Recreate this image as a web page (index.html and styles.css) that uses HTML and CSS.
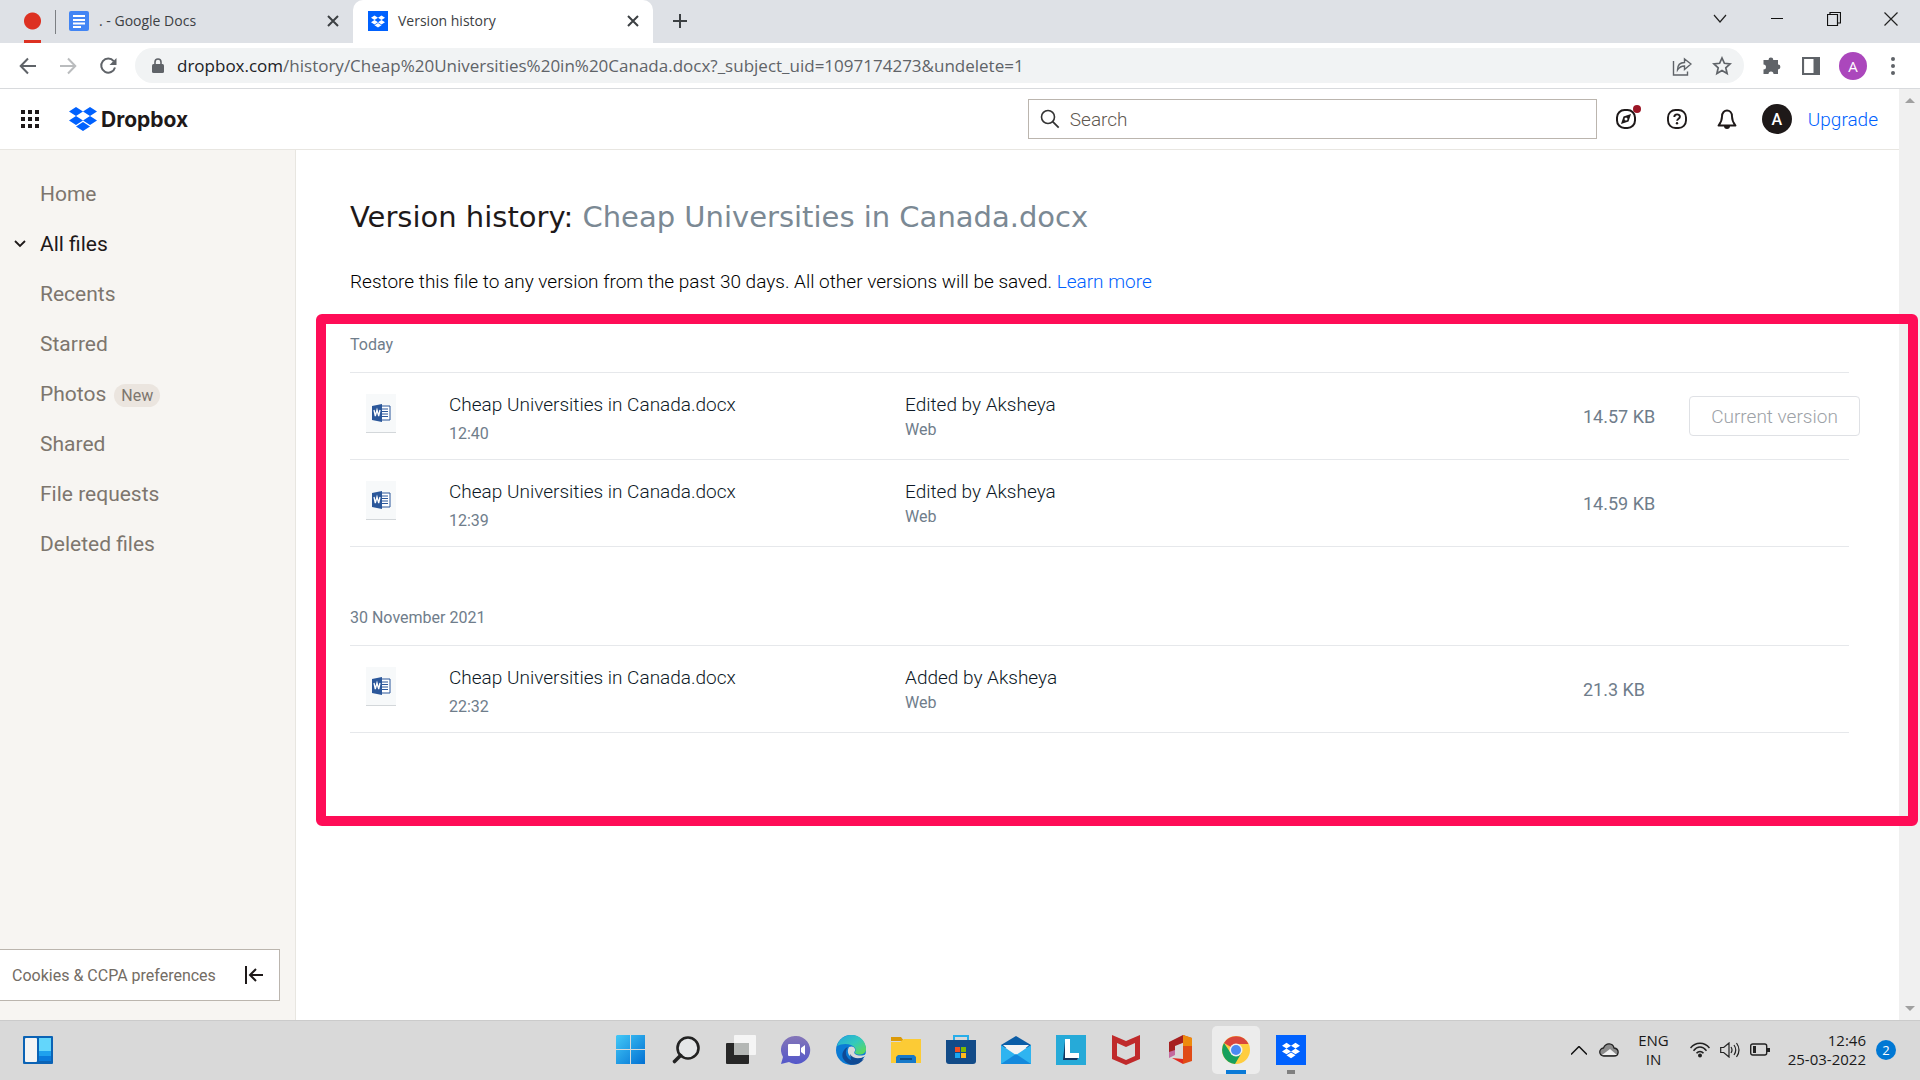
FILE: index.html
```html
<!DOCTYPE html>
<html lang="en">
<head>
<meta charset="utf-8">
<title>Version history</title>
<link rel="stylesheet" href="styles.css">
</head>
<body>
<svg class="defs" aria-hidden="true">
  <symbol id="box" viewBox="0 0 28 24"><path d="M7 0 14 4.500 7 9 0 4.500ZM21 0 28 4.500 21 9 14 4.500ZM7 9 14 13.500 7 18 0 13.500ZM21 9 28 13.500 21 18 14 13.500ZM14 15 21 19.500 14 24 7 19.500Z" fill="currentColor"/></symbol>
  <symbol id="close" viewBox="0 0 12 12"><path d="M1 1 11 11M11 1 1 11" stroke="currentColor" stroke-width="2" fill="none"/></symbol>
  <symbol id="word" viewBox="0 0 30 39">
    <rect width="30" height="39" fill="#f7f9fa"/><rect y="38" width="30" height="1" fill="#d3d7da"/>
    <path d="M14 12h10v14H14" fill="#fff" stroke="#2b579a"/><path d="M16 15h6M16 17.500h6M16 20h6M16 22.500h6" stroke="#2b579a"/>
    <path d="M6 12 16 10V28L6 26Z" fill="#2b579a"/><path d="m8 16 1.300 6 1.700-6 1.700 6L14 16" fill="none" stroke="#fff" stroke-width="1.300"/>
  </symbol>
</svg>

<header class="browser">
  <div class="tabs">
    <button class="pinned" aria-label="Recording"><span class="dot"></span></button>
    <div class="tab">
      <svg width="20" height="20" viewBox="0 0 20 20"><rect width="20" height="20" rx="2" fill="#4285f4"/><path d="M4 5h12M4 9h12M4 12.500h12M4 16h8" stroke="#fff" stroke-width="1.800"/></svg>
      <span class="tab-title">. - Google Docs</span>
      <button class="tab-close" aria-label="Close tab"><svg width="12" height="12"><use href="#close"/></svg></button>
    </div>
    <div class="tab active">
      <span class="favicon"><svg width="14" height="13"><use href="#box"/></svg></span>
      <span class="tab-title">Version history</span>
      <button class="tab-close" aria-label="Close tab"><svg width="12" height="12"><use href="#close"/></svg></button>
    </div>
    <button class="new-tab" aria-label="New tab"><svg width="16" height="16" viewBox="0 0 16 16"><path d="M8 1v14M1 8h14" stroke="#3c4043" stroke-width="2"/></svg></button>
    <div class="window-controls">
      <button aria-label="Search tabs"><svg width="14" height="14" viewBox="0 0 14 14"><path d="m1 3 6 7 6-7" fill="none" stroke="#222" stroke-width="1.200"/></svg></button>
      <button aria-label="Minimize"><svg width="14" height="14" viewBox="0 0 14 14"><path d="M1 6.500h12" stroke="#111"/></svg></button>
      <button aria-label="Restore"><svg width="14" height="14" viewBox="0 0 14 14"><path d="M.5 2.500h10v11H.5ZM3 2V.5h10.500V11H11" fill="none" stroke="#111" stroke-width="1.200"/></svg></button>
      <button aria-label="Close"><svg width="14" height="14" viewBox="0 0 14 14"><path d="m.5.5 13 13m0-13-13 13" stroke="#222" stroke-width="1.200"/></svg></button>
    </div>
  </div>
  <div class="toolbar">
    <button aria-label="Back"><svg width="18" height="18" viewBox="0 0 18 18"><path d="M17 9H2m7-7.500L1.700 9 9 16.500" fill="none" stroke="#5f6368" stroke-width="2"/></svg></button>
    <button aria-label="Forward"><svg width="18" height="18" viewBox="0 0 18 18"><path d="M1 9h15M9 1.500 16.300 9 9 16.500" fill="none" stroke="#babcbe" stroke-width="2"/></svg></button>
    <button aria-label="Reload"><svg width="20" height="20" viewBox="0 0 20 20"><path d="M15.700 5.200A7 7 0 1 0 17 11.500" fill="none" stroke="#5f6368" stroke-width="2"/><path d="M18.500 2v7h-7Z" fill="#5f6368"/></svg></button>
    <div class="address">
      <svg width="12" height="16" viewBox="0 0 12 16"><rect y="6" width="12" height="9" rx="1.500" fill="#5f6368"/><path d="M3 7V4a3 3 0 0 1 6 0v3" fill="none" stroke="#5f6368" stroke-width="1.600"/></svg>
      <span class="url"><b>dropbox.com</b>/history/Cheap%20Universities%20in%20Canada.docx?_subject_uid=1097174273&amp;undelete=1</span>
      <button aria-label="Share this page"><svg width="20" height="20" viewBox="0 0 20 20"><path d="M1.500 5v14h14v-3.500M5.500 14c0-5 3-7.500 7-7.500V3L19 8 12.500 13.500V10c-3 0-5 .8-7 4Z" fill="none" stroke="#5f6368" stroke-width="1.400"/></svg></button>
      <button aria-label="Bookmark"><svg width="20" height="20" viewBox="0 0 20 20"><path d="m10 2 2.400 5.300 5.700.6-4.300 3.900 1.300 5.700-5.100-3-5.100 3 1.300-5.700L1.900 7.900l5.700-.6Z" fill="none" stroke="#5f6368" stroke-width="1.700"/></svg></button>
    </div>
    <div class="extensions">
      <button aria-label="Extensions"><svg width="20" height="20" viewBox="0 0 20 20"><path d="M1.500 4h5a2.400 2.400 0 1 1 4.800 0H16v4.500a2.400 2.400 0 1 1 0 4.800V18h-4.500a2.500 2.500 0 1 0-5 0h-5v-4.500a2.500 2.500 0 1 0 0-5Z" fill="#5f6368"/></svg></button>
      <button aria-label="Side panel"><svg width="18" height="18" viewBox="0 0 18 18"><path d="M1 1h16v16H1Z" fill="none" stroke="#5f6368" stroke-width="2.200"/><path d="M11.500 1H17v16h-5.500Z" fill="#5f6368"/></svg></button>
      <button class="avatar purple" aria-label="Profile">A</button>
      <button aria-label="Menu"><svg width="4" height="18" viewBox="0 0 4 18"><g fill="#5f6368"><circle cx="2" cy="2" r="2"/><circle cx="2" cy="9" r="2"/><circle cx="2" cy="16" r="2"/></g></svg></button>
    </div>
  </div>
</header>

<div class="viewport">
  <div class="app">
    <header class="app-header">
      <button aria-label="Apps"><svg width="18" height="18" viewBox="0 0 18 18"><path d="M0 2h18M0 9h18M0 16h18" stroke="#1e1919" stroke-width="4" stroke-dasharray="4 3"/></svg></button>
      <a class="logo" href="#"><svg width="28" height="24"><use href="#box"/></svg><span>Dropbox</span></a>
      <label class="search">
        <svg width="20" height="20" viewBox="0 0 20 20"><circle cx="8" cy="8" r="6.500" fill="none" stroke="#333" stroke-width="1.600"/><path d="m12.700 12.700 6 6" stroke="#333" stroke-width="1.800"/></svg>
        <input type="search" placeholder="Search" aria-label="Search">
      </label>
      <div class="actions">
        <button aria-label="What's new"><svg width="28" height="28" viewBox="0 0 28 28"><rect x="4" y="5" width="18" height="18" rx="7.500" fill="none" stroke="#1e1919" stroke-width="2"/><path d="m18 9-2.500 7.500L8 19l2.500-7.500Z" fill="#1e1919"/><circle cx="13" cy="14" r="1.500" fill="#fff"/><circle cx="24" cy="4" r="4" fill="#9b1525"/></svg></button>
        <button aria-label="Help"><svg width="20" height="20" viewBox="0 0 20 20"><rect x="1" y="1" width="18" height="18" rx="7.500" fill="none" stroke="#1e1919" stroke-width="1.900"/><path d="M7.300 8c0-3.500 5.600-3.500 5.600-.3 0 1.900-2.800 2-2.800 4.100" fill="none" stroke="#1e1919" stroke-width="1.900"/><circle cx="10" cy="14.300" r="1.200" fill="#1e1919"/></svg></button>
        <button aria-label="Notifications"><svg width="20" height="20" viewBox="0 0 20 20"><path d="M1.500 16.500c2.500-3 3.500-5 3.500-9 0-8 10-8 10 0 0 4 1 6 3.500 9Z" fill="none" stroke="#1e1919" stroke-width="1.900" stroke-linejoin="round"/><path d="M7 17a3 3 0 0 0 6 0Z" fill="#1e1919"/></svg></button>
        <button class="avatar black" aria-label="Account">A</button>
        <a href="#">Upgrade</a>
      </div>
    </header>
    <div class="content">
      <aside class="sidebar">
        <nav>
          <a href="#">Home</a>
          <a class="current" href="#"><svg width="12" height="8" viewBox="0 0 12 8"><path d="m1 1 5 5 5-5" fill="none" stroke="#1e1919" stroke-width="1.800"/></svg>All files</a>
          <a href="#">Recents</a>
          <a href="#">Starred</a>
          <a href="#">Photos<span class="pill">New</span></a>
          <a href="#">Shared</a>
          <a href="#">File requests</a>
          <a href="#">Deleted files</a>
        </nav>
        <div class="cookies">
          <a href="#">Cookies &amp; CCPA preferences</a>
          <button aria-label="Collapse"><svg width="18" height="18" viewBox="0 0 18 18"><path d="M1 0v18M18 9H5.500M11 3 5 9l6 6" fill="none" stroke="#1e1919" stroke-width="2"/></svg></button>
        </div>
      </aside>
      <main>
        <h1>Version history: <span>Cheap Universities in Canada.docx</span></h1>
        <p class="intro">Restore this file to any version from the past 30 days. All other versions will be saved. <a href="#">Learn more</a></p>
        <section class="history">
          <h2>Today</h2>
          <table>
            <colgroup><col class="c-icon"><col class="c-name"><col><col class="c-size"><col class="c-action"></colgroup>
            <tr><td class="file"><svg width="30" height="39"><use href="#word"/></svg></td><td><strong>Cheap Universities in Canada.docx</strong><small class="time">12:40</small></td><td><strong>Edited by Aksheya</strong><small>Web</small></td><td class="size">14.57 KB</td><td class="action"><button disabled>Current version</button></td></tr>
            <tr><td class="file"><svg width="30" height="39"><use href="#word"/></svg></td><td><strong>Cheap Universities in Canada.docx</strong><small class="time">12:39</small></td><td><strong>Edited by Aksheya</strong><small>Web</small></td><td class="size">14.59 KB</td><td></td></tr>
          </table>
          <h2>30 November 2021</h2>
          <table>
            <colgroup><col class="c-icon"><col class="c-name"><col><col class="c-size"><col class="c-action"></colgroup>
            <tr><td class="file"><svg width="30" height="39"><use href="#word"/></svg></td><td><strong>Cheap Universities in Canada.docx</strong><small class="time">22:32</small></td><td><strong>Added by Aksheya</strong><small>Web</small></td><td class="size">21.3 KB</td><td></td></tr>
          </table>
        </section>
      </main>
    </div>
  </div>
  <div class="scrollbar">
    <svg width="10" height="5" viewBox="0 0 10 5"><path d="M0 5 5 0l5 5Z" fill="#a0a0a0"/></svg>
    <svg width="10" height="5" viewBox="0 0 10 5"><path d="m0 0 5 5 5-5Z" fill="#a0a0a0"/></svg>
  </div>
</div>

<footer class="taskbar">
  <div class="widgets">
    <button aria-label="Widgets"><svg width="30" height="28" viewBox="0 0 30 28"><rect width="30" height="28" rx="1" fill="#0b63b5"/><rect x="2" y="2" width="12" height="24" rx="1" fill="#f4f4f4"/><rect x="16" y="2" width="12" height="13" fill="#63d6fb"/><path d="M16 15h12v5H16Z" fill="#1ea1ee"/><path d="M16 20h12v5H16Z" fill="#0a7bdc"/></svg></button>
  </div>
  <div class="dock">
    <button aria-label="Start"><svg width="30" height="30" viewBox="0 0 30 30"><defs><linearGradient id="g1" x1="0" y1="0" x2="1" y2="1"><stop offset="0" stop-color="#43c9f7"/><stop offset="1" stop-color="#0270d3"/></linearGradient></defs><path d="M1 0h13v14H0V1ZM15 0h14v14H15ZM0 15h14v14H0ZM15 15h14v14H15Z" fill="url(#g1)"/></svg></button>
    <button aria-label="Search"><svg width="30" height="30" viewBox="0 0 30 30"><circle cx="17" cy="13" r="10.500" fill="#e4e6e8" stroke="#222" stroke-width="2.600"/><path d="m9.500 20.500-6 6" stroke="#222" stroke-width="3.600" stroke-linecap="round"/></svg></button>
    <button aria-label="Task view"><svg width="30" height="30" viewBox="0 0 30 30"><rect y="8" width="23" height="21" rx="1" fill="#272727"/><rect x="8" width="22" height="20" rx="1" fill="#f5f5f5"/><path d="M8 8h15v12H8Z" fill="#b4b7b5"/></svg></button>
    <button aria-label="Chat"><svg width="30" height="30" viewBox="0 0 30 30"><defs><linearGradient id="g2" x1="0" y1="0" x2="0" y2="1"><stop offset="0" stop-color="#8576b8"/><stop offset="1" stop-color="#5357ca"/></linearGradient></defs><path d="M15 1a14 14 0 1 1-7 26L0 29l2-7A14 14 0 0 1 15 1Z" fill="url(#g2)"/><rect x="7" y="9" width="12" height="12" rx="1" fill="#fff"/><path d="m20 13 4-3v10l-4-3Z" fill="#fff"/></svg></button>
    <button aria-label="Edge"><svg width="30" height="30" viewBox="0 0 30 30"><defs><linearGradient id="g3" x1="0" y1="0" x2="1" y2="1"><stop offset="0" stop-color="#20a5df"/><stop offset=".5" stop-color="#34c9bd"/><stop offset="1" stop-color="#62dd47"/></linearGradient></defs><circle cx="15" cy="15" r="15" fill="#0b7bd5"/><path d="M1 11C5-4 28-4 30 13c1 7-8 8-11 5-1-1 2-2 0-5-3-5-13-5-18-2Z" fill="url(#g3)"/><path d="M12 12c-6 7 1 19 16 12-6 8-16 7-20 1-4-5 0-12 4-13Z" fill="#104a94"/><path d="M13 12c-3 5 0 11 7 12 4 0 7-1 9-3V29H30V19c-3 2-8 2-11 0-2-2 1-3 0-5-1-3-4-3-6-2Z" fill="#d9d9d9"/><path d="M14 19c3 5 9 5 14 3-3 6-10 7-13 3Z" fill="#104a94"/></svg></button>
    <button aria-label="File Explorer"><svg width="30" height="28" viewBox="0 0 30 28"><path d="M0 1h10l3 4H0Z" fill="#dc9a08"/><path d="M0 6h9l4-3h17v24H0Z" fill="#fccb35"/><path d="M5 27v-6l2-2h16l2 2v6Z" fill="#1779c9"/><path d="M9 23h12" stroke="#0c4d87" stroke-width="2"/></svg></button>
    <button aria-label="Microsoft Store"><svg width="30" height="30" viewBox="0 0 30 30"><path d="M8 6V1h14v5" fill="none" stroke="#27aeea" stroke-width="2"/><path d="M0 5h30v21q0 3-3 3H3q-3 0-3-3Z" fill="#124b88"/><path d="M9 12h5v5H9Z" fill="#f25022"/><path d="M15 12h5v5h-5Z" fill="#7fba00"/><path d="M9 18h5v5H9Z" fill="#1aa7f0"/><path d="M15 18h5v5h-5Z" fill="#ffb91b"/></svg></button>
    <button aria-label="Mail"><svg width="30" height="28" viewBox="0 0 30 28"><path d="M0 9 15 0l15 9v3H0Z" fill="#0b5da6"/><path d="M2 9h26L15 21Z" fill="#f4f4f4"/><path d="m0 9 15 10L30 9v19H0Z" fill="#2fb4f0"/><path d="M0 28 15 18l15 10Z" fill="#1489dc"/></svg></button>
    <button aria-label="Lenovo Vantage"><svg width="30" height="30" viewBox="0 0 30 30"><path d="M0 0h30v30H0Z" fill="#26aad8"/><path d="m9 6-2 19h14l1-2H11Z" fill="#12355f"/><path d="M9 4h5v14h9v5H9Z" fill="#fff"/></svg></button>
    <button aria-label="McAfee"><svg width="28" height="30" viewBox="0 0 28 30"><path d="m0 0 14 6L28 0v24l-14 6-14-6Zm5 8v13l9 4 9-4V8l-9 4Z" fill="#c02a2b"/></svg></button>
    <button aria-label="Office"><svg width="24" height="30" viewBox="0 0 24 30"><path d="M0 7 14 0l2 1v6L6 11v8L0 22Z" fill="#a62020"/><path d="m14 0 9 3v23l-9 3Z" fill="#e04b16"/><path d="m14 0 9 3v8h-9Z" fill="#ed8a0d"/><path d="m3 23 11 1v5Z" fill="#e02a20"/><path d="m0 17 6-2v5l-6 3Z" fill="#c46a9f"/></svg></button>
    <button class="running" aria-label="Chrome"><svg width="28" height="28" viewBox="0 0 28 28"><circle cx="14" cy="14" r="14" fill="#ffcd40"/><path d="M14 14 2 7a14 14 0 0 1 24.500 1H14Z" fill="#d9453c"/><path d="M2 7a14 14 0 0 0 11 21l6.500-11L14 14 8 16Z" fill="#17a05d"/><circle cx="14" cy="14" r="6.500" fill="#f0f0f0"/><circle cx="14" cy="14" r="5" fill="#4a89f3"/></svg></button>
    <button class="open" aria-label="Dropbox"><span class="dropbox-tile"><svg width="18" height="17"><use href="#box"/></svg></span></button>
  </div>
  <div class="tray">
    <button aria-label="Hidden icons"><svg width="16" height="9" viewBox="0 0 16 9"><path d="m0 8.500 8-8 8 8" fill="none" stroke="#111" stroke-width="1.500"/></svg></button>
    <svg class="cloud" width="20" height="14" viewBox="0 0 20 14"><path d="M5 13a4 4 0 0 1-.5-8C7-1 14 0 15 5c6 1 5 8 0 8Z" fill="#8c8c8c" stroke="#222" stroke-width="1.300"/><path d="m3 12 8-6 7 6Z" fill="#f0f0f0"/></svg>
    <span class="lang">ENG<br>IN</span>
    <div class="status">
      <svg width="20" height="16" viewBox="0 0 20 16"><g fill="none" stroke="#222" stroke-width="1.500"><path d="M.5 6c5-6.500 14-6.500 19 0M3.500 8.700c4-5 9-5 13 0M6.500 11.300c2-2.500 5-2.500 7 0"/></g><circle cx="10" cy="13.500" r="2" fill="#222"/></svg>
      <svg width="20" height="16" viewBox="0 0 20 16"><path d="M.7 5.500h3L9 1v14l-5.300-4.500h-3ZM11 5q2 3 0 6M14 3q3.500 5 0 10M16.500 1q5 7 0 14" fill="none" stroke="#222" stroke-width="1.200"/></svg>
      <svg width="20" height="14" viewBox="0 0 20 14"><rect x=".7" y="1" width="16" height="11" rx="2" fill="none" stroke="#222" stroke-width="1.400"/><path d="M3 3h3v7H3ZM17 5h3v4h-3Z" fill="#222"/></svg>
    </div>
    <time>12:46<br>25-03-2022</time>
    <span class="count">2</span>
  </div>
</footer>
</body>
</html>
```
FILE: styles.css
```css
* { box-sizing: border-box; }
body {
  margin: 0;
  min-height: 100vh;
  display: flex;
  flex-direction: column;
  font-family: Roboto, "Liberation Sans", sans-serif;
  font-size: 19px;
  font-weight: 300;
  color: #1b2733;
  background: #fff;
}
button {
  display: flex;
  align-items: center;
  justify-content: center;
  border: 0;
  padding: 0;
  background: none;
  font: inherit;
  color: inherit;
}
a { color: #0061fe; text-decoration: none; }
svg { display: block; flex: none; }
.defs { width: 0; height: 0; position: absolute; }

/* Browser frame */
.browser { font-family: "Open Sans", "Noto Sans", sans-serif; font-weight: 400; }
.tabs {
  display: flex;
  height: 43px;
  background: #dee1e6;
  color: #3c4043;
  font-size: 14px;
}
.pinned {
  width: 32px;
  margin-left: 24px;
  justify-content: flex-start;
  background: linear-gradient(#7c7f83, #7c7f83) right / 1px 24px no-repeat;
}
.dot {
  width: 17px;
  height: 43px;
  background: linear-gradient(#dd3122, #dd3122) bottom / 17px 3px no-repeat, radial-gradient(circle at 50% 21px, #dd3122 8px, transparent 9px);
}
.tab {
  display: flex;
  align-items: center;
  gap: 10px;
  width: 297px;
  padding: 0 14px 1px 13px;
}
.tab.active {
  width: 300px;
  padding-left: 15px;
  background: #fff;
  border-radius: 10px 10px 0 0;
}
.tab-title { flex: 1; padding-bottom: 2px; }
.favicon, .dropbox-tile {
  display: grid;
  place-items: center;
  width: 20px;
  height: 20px;
  background: #0061fe;
  color: #fff;
}
.new-tab { width: 54px; height: 42px; }
.window-controls { display: flex; margin-left: auto; padding-right: 1px; }
.window-controls button { width: 57px; height: 37px; }
.toolbar {
  display: flex;
  align-items: center;
  height: 46px;
  padding: 0 21px 0 8px;
  border-bottom: 1px solid #d8dadd;
}
.toolbar > button { width: 40px; }
.address {
  flex: 1;
  display: flex;
  align-items: center;
  gap: 20px;
  height: 35px;
  margin-left: 7px;
  padding: 0 12px 0 17px;
  border-radius: 18px;
  background: #f1f3f4;
}
.url { flex: 1; margin-left: -7px; font-size: 17px; color: #5f6368; }
.url b { font-weight: 400; color: #202124; }
.extensions { display: flex; align-items: center; gap: 20px; padding-left: 18px; }
.extensions .purple { margin-left: -1px; }
.extensions button:last-child { width: 12px; }
.avatar { border-radius: 50%; color: #fff; }
.purple { width: 28px; height: 28px; font-size: 15px; background: #ab47bc; }
.black { width: 30px; height: 30px; font-size: 16px; font-weight: 500; background: #1e1919; }

/* Dropbox page */
.viewport { flex: 1; display: flex; }
.app { flex: 1; min-width: 0; display: flex; flex-direction: column; }
.scrollbar {
  width: 21px;
  display: flex;
  flex-direction: column;
  align-items: center;
  justify-content: space-between;
  padding: 9px 0;
  background: #f0f0f0;
}
.app-header {
  display: flex;
  align-items: center;
  height: 61px;
  padding: 0 21px;
  border-bottom: 1px solid #e8e6e1;
}
.logo {
  display: flex;
  align-items: center;
  gap: 4px;
  margin-left: 30px;
  font: 700 21px Inter, sans-serif;
}
.logo span { color: #1e1919; }
.search {
  display: flex;
  align-items: center;
  gap: 10px;
  width: 569px;
  height: 40px;
  margin-left: auto;
  padding: 0 11px;
  border: 1px solid #bbb5ae;
}
.search input {
  flex: 1;
  border: 0;
  padding: 0;
  outline: 0;
  background: none;
  font: inherit;
  color: #1e1919;
}
.search input::placeholder { color: #5f5850; opacity: 1; }
.actions { display: flex; align-items: center; margin-left: 15px; }
.actions button { width: 30px; margin-right: 20px; }
.actions .avatar { margin: 0 16px 0 0; }
.content { flex: 1; display: flex; }
.sidebar {
  width: 296px;
  display: flex;
  flex-direction: column;
  justify-content: space-between;
  padding: 19px 0;
  background: #f7f5f2;
  border-right: 1px solid #e8e6e1;
}
.sidebar nav a {
  display: flex;
  align-items: center;
  height: 50px;
  padding-left: 40px;
  font-size: 21px;
  font-weight: 400;
  color: #7d766e;
}
.sidebar nav .current { padding-left: 14px; gap: 14px; color: #1e1919; }
.sidebar nav .pill {
  margin: 3px 0 0 8px;
  padding: 0 7px;
  border-radius: 12px;
  background: #ebe5df;
  font-size: 16px;
  line-height: 23px;
}
.cookies {
  display: flex;
  align-items: center;
  justify-content: space-between;
  width: 280px;
  height: 52px;
  padding: 0 16px 0 12px;
  border: 1px solid #bbb5ae;
  border-left: 0;
  background: #fff;
}
.cookies a { font-size: 16px; font-weight: 400; color: #736c64; }
main { flex: 1; min-width: 0; padding: 47px 0 0 20px; }
h1 {
  margin: 0 34px;
  font: 400 29px/40px "DejaVu Sans", sans-serif;
  color: #1e1919;
}
h1 span { color: #7b8994; }
.intro { margin: 33px 34px 20px; line-height: 24px; color: #000; }
.history {
  position: relative;
  margin-right: -19px;
  padding: 0 59px 83px 24px;
  border: 10px solid #ff0d57;
  border-radius: 6px;
}
h2 {
  margin: 0;
  padding: 11px 0 17px;
  font-size: 16px;
  font-weight: 400;
  line-height: 20px;
  color: #6f7d8b;
}
table + h2 { margin-top: 50px; }
table {
  width: 100%;
  table-layout: fixed;
  border-collapse: collapse;
  border-top: 1px solid #e6e8eb;
}
tr { height: 87px; border-bottom: 1px solid #e6e8eb; }
td { padding: 19px 0 0; vertical-align: top; }
.c-icon { width: 99px; }
.c-name { width: 456px; }
.c-size { width: 106px; }
.c-action { width: 160px; }
td.file { padding: 21px 0 0 16px; }
td strong, td small { display: block; line-height: 25px; font-weight: 300; font-size: 19px; color: #0d1926; }
td small { font-size: 16px; font-weight: 400; color: #6f7d8b; }
td .time { padding-top: 4px; }
td.size { padding-top: 32px; font-size: 18px; font-weight: 400; line-height: 24px; color: #6f7d8b; }
td.action { padding-top: 23px; }
.action button {
  width: 171px;
  height: 40px;
  border: 1px solid #dfe1e5;
  border-radius: 4px;
  color: #9da2a7;
}

/* Windows taskbar */
.taskbar {
  display: grid;
  grid-template-columns: 1fr auto 1fr;
  align-items: center;
  height: 60px;
  padding: 0 0 1px 1px;
  border-top: 1px solid #cbcbcb;
  background: #d9d9d9;
  color: #1a1a1a;
  font: 15px/19px "Open Sans", "Noto Sans", sans-serif;
}
.widgets { padding-left: 22px; }
.dock { display: flex; gap: 7px; }
.dock button { width: 48px; height: 48px; border-radius: 5px; }
.running {
  background: linear-gradient(#0a7ad7, #0a7ad7) bottom / 20px 4px no-repeat, #ececec;
}
.open { background: linear-gradient(#808080, #808080) bottom / 8px 4px no-repeat; }
.dropbox-tile { width: 30px; height: 30px; }
.tray {
  display: flex;
  align-items: center;
  justify-content: flex-end;
  padding-right: 24px;
}
.cloud { margin-left: 12px; }
.lang { margin-left: 19px; text-align: center; }
.status { display: flex; align-items: center; gap: 10px; margin: 0 18px 0 21px; }
.tray time { text-align: right; }
.count {
  width: 20px;
  height: 20px;
  margin-left: 10px;
  border-radius: 50%;
  background: #0078d4;
  color: #fff;
  font-size: 13px;
  line-height: 20px;
  text-align: center;
}
```
